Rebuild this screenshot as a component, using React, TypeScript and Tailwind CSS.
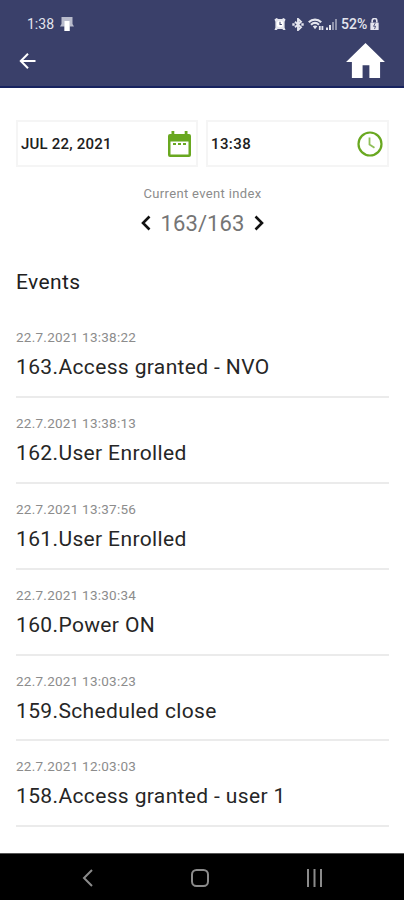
type EventItem = { index: number; date: string; label: string };

const events: EventItem[] = [
  { index: 163, date: "22.7.2021 13:38:22", label: "Access granted - NVO" },
  { index: 162, date: "22.7.2021 13:38:13", label: "User Enrolled" },
  { index: 161, date: "22.7.2021 13:37:56", label: "User Enrolled" },
  { index: 160, date: "22.7.2021 13:30:34", label: "Power ON" },
  { index: 159, date: "22.7.2021 13:03:23", label: "Scheduled close" },
  { index: 158, date: "22.7.2021 12:03:03", label: "Access granted - user 1" },
];

function StatusBar() {
  return (
    <div className="flex h-10 items-end justify-between pl-[27px] pr-[25px] text-[#e4e5ee]">
      <div className="flex h-8 items-center gap-[5px]">
        <span className="w-[28px] whitespace-nowrap text-[14px]">1:38</span>
        <svg width="14" height="14" viewBox="0 0 14 14" fill="currentColor">
          <path d="M1.5 0h11v7l1.5 2.5H9.8V14H4.5V9.5H0L1.5 7z" opacity=".75" />
          <path d="M4.5 4h5v10h-5z" fill="#fff" />
        </svg>
      </div>
      <div className="flex h-8 items-center">
        <svg width="12" height="12" viewBox="0 0 12 13" fill="currentColor">
          <path d="M0 1.5 2.2 0l2 1H8l2-1L12 1.5 11 4v6.5L12 13H9.5l-1-1h-5l-1 1H0l1-2.5V4z" />
          <circle cx="6" cy="6.5" r="3.5" fill="#fff" />
          <path d="M6 4v3h2" fill="none" stroke="#3a406a" strokeWidth="1.1" />
        </svg>
        <svg className="ml-[6px]" width="12" height="13" viewBox="0 0 12 13" fill="none" stroke="currentColor" strokeWidth="1.9">
          <path d="m3 3.7 6 5.5-3 2.9V.9l3 2.9-6 5.5" />
          <path d="M.3 6.5h2.4M9.3 6.5h2.4" strokeWidth="2.4" />
        </svg>
        <svg className="ml-[4px]" width="16" height="13" viewBox="0 0 16 13" fill="none" stroke="currentColor">
          <path d="M.8 4.3c3.6-3.6 8.8-3.6 12.4 0M3 6.8c2.4-2.2 5.6-2.2 8 0" strokeWidth="2.2" />
          <path d="m4.8 8.3 2.2 3 2.4-3c-1.4-1.1-3.2-1.1-4.6 0z" fill="currentColor" stroke="none" />
          <path d="M11.8 12V8M14.4 8v4" strokeWidth="1.8" />
        </svg>
        <svg className="ml-[2px]" width="11" height="11" viewBox="0 0 11 11" fill="currentColor">
          <path d="M0 8.5h2V11H0zM3 6h2v5H3z" />
          <path d="M6 3h2v8H6zM9 0h2v11H9z" opacity=".5" />
        </svg>
        <span className="ml-[4px] w-[28px] whitespace-nowrap text-[14px] font-medium">52%</span>
        <svg className="ml-px" width="9" height="12" viewBox="0 0 9 13">
          <path d="M2 5V3a2.5 2.5 0 0 1 5 0v2" fill="none" stroke="currentColor" strokeWidth="1.8" />
          <path d="M0 5h9v8H0z" fill="currentColor" />
          <path d="M5.3 5.5 3.5 9h2.2l-1.2 3" fill="none" stroke="#3a406a" strokeWidth=".9" />
        </svg>
      </div>
    </div>
  );
}

function Header() {
  return (
    <header className="h-[88px] border-b-2 border-[#17235f] bg-[#3a406a]">
      <StatusBar />
      <div className="flex h-[41px] items-center justify-between pl-[19px] pr-[19px]">
        <svg className="mt-px" width="17" height="18" viewBox="0 0 17 18" fill="none" stroke="#fff" strokeWidth="2">
          <path d="M16.5 9H2M9 1.8 1.8 9 9 16.2" />
        </svg>
        <svg width="39" height="35" viewBox="0 0 40 36" fill="#fff">
          <path d="M20 0 40 19.5h-5V36H24V23h-7v13H6V19.5H0z" />
        </svg>
      </div>
    </header>
  );
}

function DateTimeFields() {
  return (
    <div className="flex gap-2">
      <div className="flex h-[47px] w-[182px] items-center justify-between border-2 border-[#f5f5f5] pl-[3px] pr-[5px] pt-px">
        <span className="text-[15px] font-medium tracking-[0.2px]">JUL 22, 2021</span>
        <svg className="mb-px" width="23" height="26" viewBox="0 0 23 26" fill="#69a820">
          <path d="M3.5 0h2.8v3h10.4V0h2.8v3H21a2 2 0 0 1 2 2v19a2 2 0 0 1-2 2H2a2 2 0 0 1-2-2V5a2 2 0 0 1 2-2h1.5z" />
          <path d="M2.5 10.5h18v13h-18z" fill="#fff" />
          <path d="M5 12h3v2H5zM10 12h3v2h-3zM15 12h3v2h-3z" />
        </svg>
      </div>
      <div className="flex h-[47px] w-[183px] items-center justify-between border-2 border-[#f5f5f5] pl-[3px] pr-[4px] pt-px">
        <span className="text-[15px] font-medium tracking-[0.4px]">13:38</span>
        <svg className="mb-px" width="26" height="26" viewBox="0 0 26 26" fill="none" stroke="#69a820">
          <circle cx="13" cy="13" r="11.5" strokeWidth="2.2" />
          <path d="M12.5 6.5v7l5 3.3" strokeWidth="1.8" strokeOpacity=".75" />
        </svg>
      </div>
    </div>
  );
}

function EventIndex() {
  return (
    <div className="flex flex-col items-center pt-[17px]">
      <span className="text-[13px] leading-5 tracking-[0.35px] text-[#8c8c8c]">Current event index</span>
      <div className="flex h-[38px] items-center gap-[10px]">
        <svg width="10" height="16" viewBox="0 0 10 16" fill="none" stroke="#111" strokeWidth="2.6">
          <path d="M8.5 1.5 2 8l6.5 6.5" />
        </svg>
        <span className="text-[22px] tracking-[0.1px] text-[#757575]">163/163</span>
        <svg width="10" height="16" viewBox="0 0 10 16" fill="none" stroke="#111" strokeWidth="2.6">
          <path d="M1.5 1.5 8 8l-6.5 6.5" />
        </svg>
      </div>
    </div>
  );
}

function EventRow({ event }: { event: EventItem }) {
  return (
    <li className="h-[85.9px] border-b-2 border-[#ebebeb] pt-[15px]">
      <div className="text-[13.5px] leading-5 tracking-[0.25px] text-[#8c8c8c]">{event.date}</div>
      <div className="pt-[5px] text-[21px] leading-[30px] tracking-[0.36px] text-[#262626]">
        {event.index}.{event.label}
      </div>
    </li>
  );
}

function NavigationBar() {
  return (
    <nav className="flex h-[47px] items-center justify-between border-t border-[#555] bg-black pl-[82px] pr-[81px] pt-px">
      <svg width="12" height="18" viewBox="0 0 12 18" fill="none" stroke="#8b8b8b" strokeWidth="2">
        <path d="M10 1 2 9l8 8" />
      </svg>
      <svg width="18" height="18" viewBox="0 0 18 18" fill="none" stroke="#8b8b8b" strokeWidth="2">
        <rect x="1" y="1" width="16" height="16" rx="4.5" />
      </svg>
      <svg width="17" height="18" viewBox="0 0 17 18" fill="none" stroke="#8b8b8b" strokeWidth="2">
        <path d="M2 0v18M8.5 0v18M15 0v18" />
      </svg>
    </nav>
  );
}

export default function App() {
  return (
    <div className="flex h-[900px] w-[404px] flex-col overflow-hidden bg-white font-['Roboto',sans-serif] text-[#202020]">
      <Header />
      <main className="flex-1 pl-4 pr-[15px] pt-[32px]">
        <DateTimeFields />
        <EventIndex />
        <h1 className="mt-[25px] text-[21px] leading-[30px] tracking-[0.4px]">Events</h1>
        <ul className="mt-[15px]">
          {events.map((event) => (
            <EventRow key={event.index} event={event} />
          ))}
        </ul>
      </main>
      <NavigationBar />
    </div>
  );
}
